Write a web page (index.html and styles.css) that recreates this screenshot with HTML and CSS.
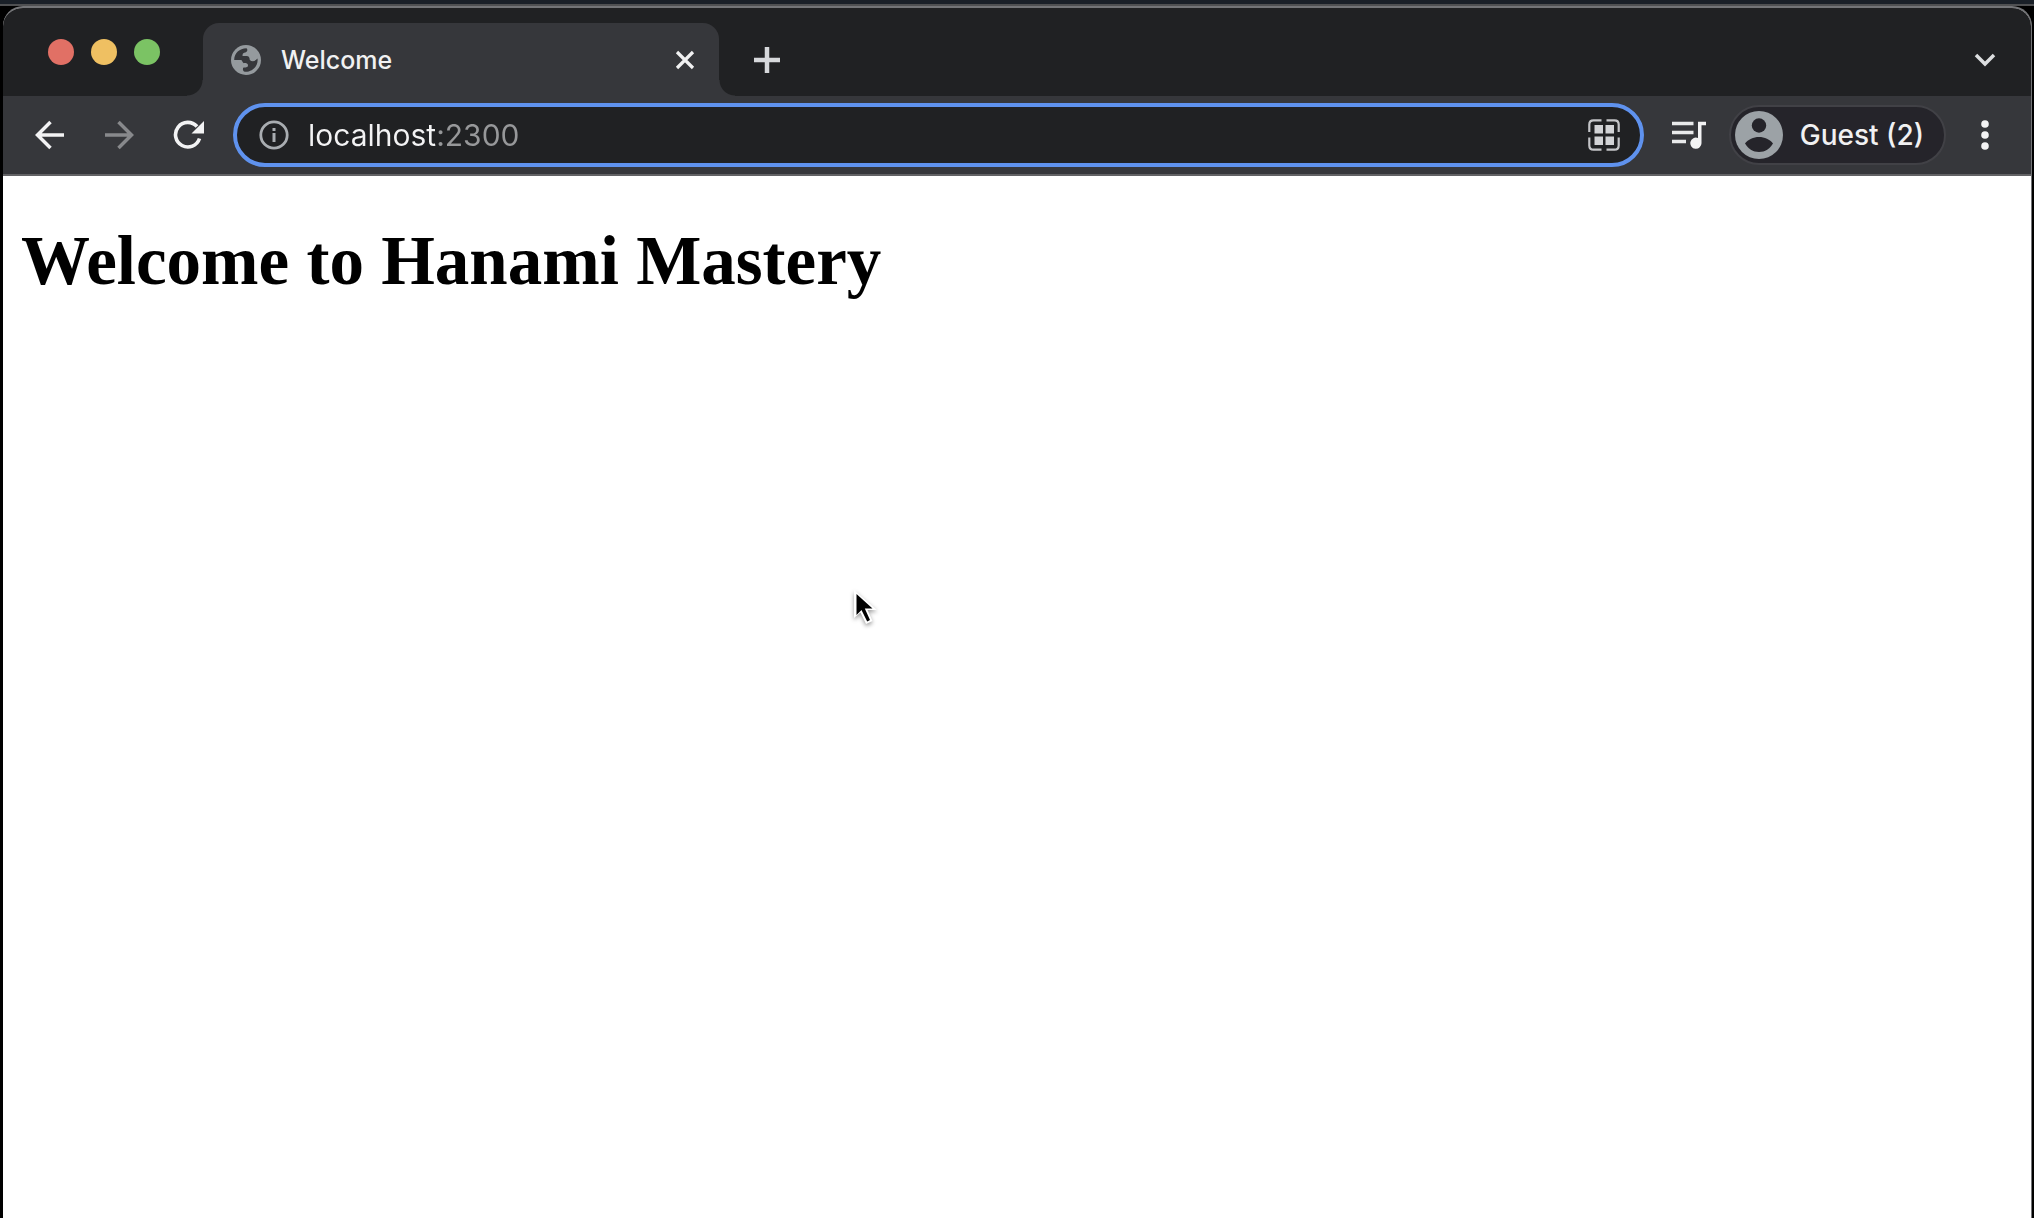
FILE: index.html
```html
<!DOCTYPE html>
<html lang="en">
<head>
<meta charset="utf-8">
<title>Welcome</title>
<link rel="stylesheet" href="styles.css">
</head>
<body>
<div class="window">
  <header class="tabstrip">
    <div class="lights">
      <button class="light light-close" aria-label="Close window"></button>
      <button class="light light-minimize" aria-label="Minimize window"></button>
      <button class="light light-zoom" aria-label="Zoom window"></button>
    </div>
    <div class="tab">
      <svg class="globe" viewBox="0 0 30 30" aria-hidden="true">
        <circle cx="15" cy="15" r="15" fill="#959a9e"/>
        <path d="M3.200 15C3 8.500 8.500 3.200 15.500 3.200C17 4.500 16.500 7 14 7.500C12 8 11.500 8.500 11.500 11H15.500C18 11 18.500 12.500 18.800 15C21 17 24 16.500 26.500 13.500C27.500 20.500 22 27 14 26.800C11.500 26.500 11.500 23.500 12.500 22.500C14 22.500 17 22.500 17 20.500C17 17.500 14 18.500 12.500 18C11 17 11.500 15 9.500 15Z" fill="#36373b"/>
      </svg>
      <span class="tab-title">Welcome</span>
      <button class="icon-button" aria-label="Close tab">
        <svg width="20" height="20" viewBox="0 0 20 20"><path d="M2 2L18 18M18 2L2 18" stroke="#f1f1f2" stroke-width="3.200"/></svg>
      </button>
    </div>
    <button class="icon-button new-tab" aria-label="New tab">
      <svg width="26" height="26" viewBox="0 0 26 26"><path d="M13 0V26M0 13H26" stroke="#d6d8db" stroke-width="4.500"/></svg>
    </button>
    <button class="icon-button tab-search" aria-label="Search tabs">
      <svg width="22" height="14" viewBox="0 0 22 14"><path d="M2 2L11 11L20 2" fill="none" stroke="#dcdee0" stroke-width="3.500"/></svg>
    </button>
  </header>

  <nav class="toolbar">
    <div class="nav-buttons">
      <button class="icon-button" aria-label="Back">
        <svg width="30" height="30" viewBox="0 0 30 30"><path d="M29 15H3M15.500 2L2.500 15L15.500 28" fill="none" stroke="#f3f3f4" stroke-width="3.500"/></svg>
      </button>
      <button class="icon-button" aria-label="Forward">
        <svg width="30" height="30" viewBox="0 0 30 30"><path d="M1 15H27M14.500 2L27.500 15L14.500 28" fill="none" stroke="#88898c" stroke-width="3.500"/></svg>
      </button>
      <button class="icon-button" aria-label="Reload">
        <svg width="32" height="30" viewBox="0 0 32 30"><path d="M26.500 18.500A12.300 12.300 0 1 1 24 6.500" fill="none" stroke="#f3f3f4" stroke-width="3.600"/><path d="M31 1V13.500H18.500Z" fill="#f3f3f4"/></svg>
      </button>
    </div>
    <div class="omnibox">
      <button class="icon-button" aria-label="Site information">
        <svg width="30" height="30" viewBox="0 0 30 30"><circle cx="15" cy="15" r="13.200" fill="none" stroke="#a9adb1" stroke-width="2.800"/><path d="M15 13V22M15 8V11" stroke="#a9adb1" stroke-width="3"/></svg>
      </button>
      <input class="address" type="text" value="localhost:2300" aria-label="Address" spellcheck="false">
      <button class="icon-button" aria-label="Page actions">
        <svg width="32" height="32" viewBox="0 0 32 32"><path d="M1.300 13V5.500Q1.300 1.300 5.500 1.300H13.500M18.500 1.300H26.500Q30.700 1.300 30.700 5.500V13M30.700 18.500V26.500Q30.700 30.700 26.500 30.700H18.500M13.500 30.700H5.500Q1.300 30.700 1.300 26.500V18.500" fill="none" stroke="#c4c5c8" stroke-width="2.200"/><path d="M6.500 6H15V14.500H6.500ZM17.500 6H26V14.500H17.500ZM6.500 17.500H15V26H6.500ZM17.500 17.500H26V26H17.500Z" fill="#d2d3d6"/></svg>
      </button>
    </div>
    <button class="icon-button" aria-label="Media controls">
      <svg width="36" height="28" viewBox="0 0 36 28"><path d="M1 2.500H22.500M1 11.500H22.500M1 20.500H15" stroke="#e9eaeb" stroke-width="3.600"/><path d="M27 0.700H35V4.300H30.500V22A5.600 5.600 0 1 1 27 17Z" fill="#f3f3f4"/></svg>
    </button>
    <button class="profile">
      <svg width="48" height="48" viewBox="0 0 48 48" aria-hidden="true"><circle cx="24" cy="24" r="24" fill="#9ca2a6"/><circle cx="24" cy="14.500" r="7.200" fill="#25242a"/><path d="M10 32.500C13 28.500 18.500 26 24 26S35 28.500 38 32.500C35 37.500 30 41 24 41S13 37.500 10 32.500Z" fill="#25242a"/></svg>
      <span>Guest (2)</span>
    </button>
    <button class="icon-button menu" aria-label="Menu">
      <svg width="8" height="30" viewBox="0 0 8 30"><g fill="#f3f3f4"><circle cx="4" cy="4" r="3.800"/><circle cx="4" cy="15" r="3.800"/><circle cx="4" cy="26" r="3.800"/></g></svg>
    </button>
  </nav>

  <main class="page">
    <h1>Welcome to Hanami Mastery</h1>
  </main>
</div>
<svg class="pointer" width="32" height="42" viewBox="0 0 32 42" aria-hidden="true">
  <path d="M4 1L4 29L10.500 23.500L16 35L22.500 32L17.500 21H27Z" fill="#fff"/>
  <path d="M6.500 5V26L11.500 21L17.200 32.500L20 31L14.800 19.500H22.500Z" fill="#000"/>
</svg>
</body>
</html>
```
FILE: styles.css
```css
* {
  box-sizing: border-box;
}

body {
  margin: 0;
  min-height: 100vh;
  display: flex;
  flex-direction: column;
  padding: 6px 2px 0 3px;
  background: linear-gradient(#1a2028 4px, #4f5052 4px 6px, #000 6px);
  font-family: Inter, "Liberation Sans", sans-serif;
}

button {
  margin: 0;
  padding: 0;
  border: 0;
  background: none;
  font: inherit;
}

svg {
  display: block;
  flex: none;
}

.window {
  flex: 1;
  display: flex;
  flex-direction: column;
  border: 1px solid #737477;
  border-width: 2px 1px 0 0;
  border-radius: 20px 20px 0 0;
  overflow: hidden;
  background: #fff;
}

.tabstrip {
  display: flex;
  align-items: flex-end;
  height: 88px;
  background: #202123;
}

.lights {
  display: flex;
  align-self: center;
  gap: 17px;
  width: 200px;
  padding-left: 45px;
}

.light {
  width: 26px;
  height: 26px;
  border-radius: 50%;
}

.light-close { background: #e17065; }
.light-minimize { background: #efc062; }
.light-zoom { background: #7bc364; }

.tab {
  position: relative;
  display: flex;
  align-items: center;
  width: 516px;
  height: 73px;
  padding: 0 24px 0 28px;
  border-radius: 16px 16px 0 0;
  background: #36373b;
  color: #f1f1f2;
  font-size: 25px;
  font-weight: 500;
}

.tab::before,
.tab::after {
  content: "";
  position: absolute;
  bottom: 0;
  width: 16px;
  height: 16px;
}

.tab::before {
  right: 100%;
  background: radial-gradient(circle at 0 0, #202123 15px, #36373b 16px);
}

.tab::after {
  left: 100%;
  background: radial-gradient(circle at 100% 0, #202123 15px, #36373b 16px);
}

.globe {
  width: 30px;
  height: 30px;
}

.tab-title {
  flex: 1;
  padding-left: 20px;
}

.icon-button {
  display: flex;
  align-items: center;
  justify-content: center;
}

.new-tab,
.tab-search {
  height: 73px;
}

.new-tab {
  margin-left: 35px;
}

.tab-search {
  margin: 0 35px 0 auto;
}

.toolbar {
  display: flex;
  align-items: center;
  height: 80px;
  padding: 0 42px 0 32px;
  border-bottom: 2px solid #626265;
  background: #36373b;
}

.nav-buttons {
  display: flex;
  gap: 39px;
  margin-right: 28px;
}

.omnibox {
  flex: 1;
  display: flex;
  align-items: center;
  height: 64px;
  padding: 0 20px 0 22px;
  border: 4px solid #5f92ee;
  border-radius: 32px;
  background: #202123;
  margin-right: 27px;
}

.address {
  flex: 1;
  min-width: 0;
  height: 48px;
  margin: 0 16px 0 19px;
  padding: 0;
  border: 0;
  outline: 0;
  background: linear-gradient(90deg, #f3f3f4 128px, #97989a 128px);
  background-clip: text;
  -webkit-text-fill-color: transparent;
  font: 400 30px Inter, "Liberation Sans", sans-serif;
}

.profile {
  display: flex;
  align-items: center;
  gap: 17px;
  height: 60px;
  margin: 0 35px 0 22px;
  padding: 0 20px 0 4px;
  border: 2px solid #414146;
  border-radius: 30px;
  background: #25242a;
  color: #f1f1f2;
  font-size: 28px;
  font-weight: 500;
}

.page {
  flex: 1;
  padding: 46px 18px;
}

h1 {
  margin: 0;
  color: #000;
  font: 700 69px/78px "Liberation Serif", serif;
}

.pointer {
  position: absolute;
  left: 850px;
  top: 589px;
  filter: drop-shadow(0 2px 2px rgba(0, 0, 0, 0.4));
}
```
